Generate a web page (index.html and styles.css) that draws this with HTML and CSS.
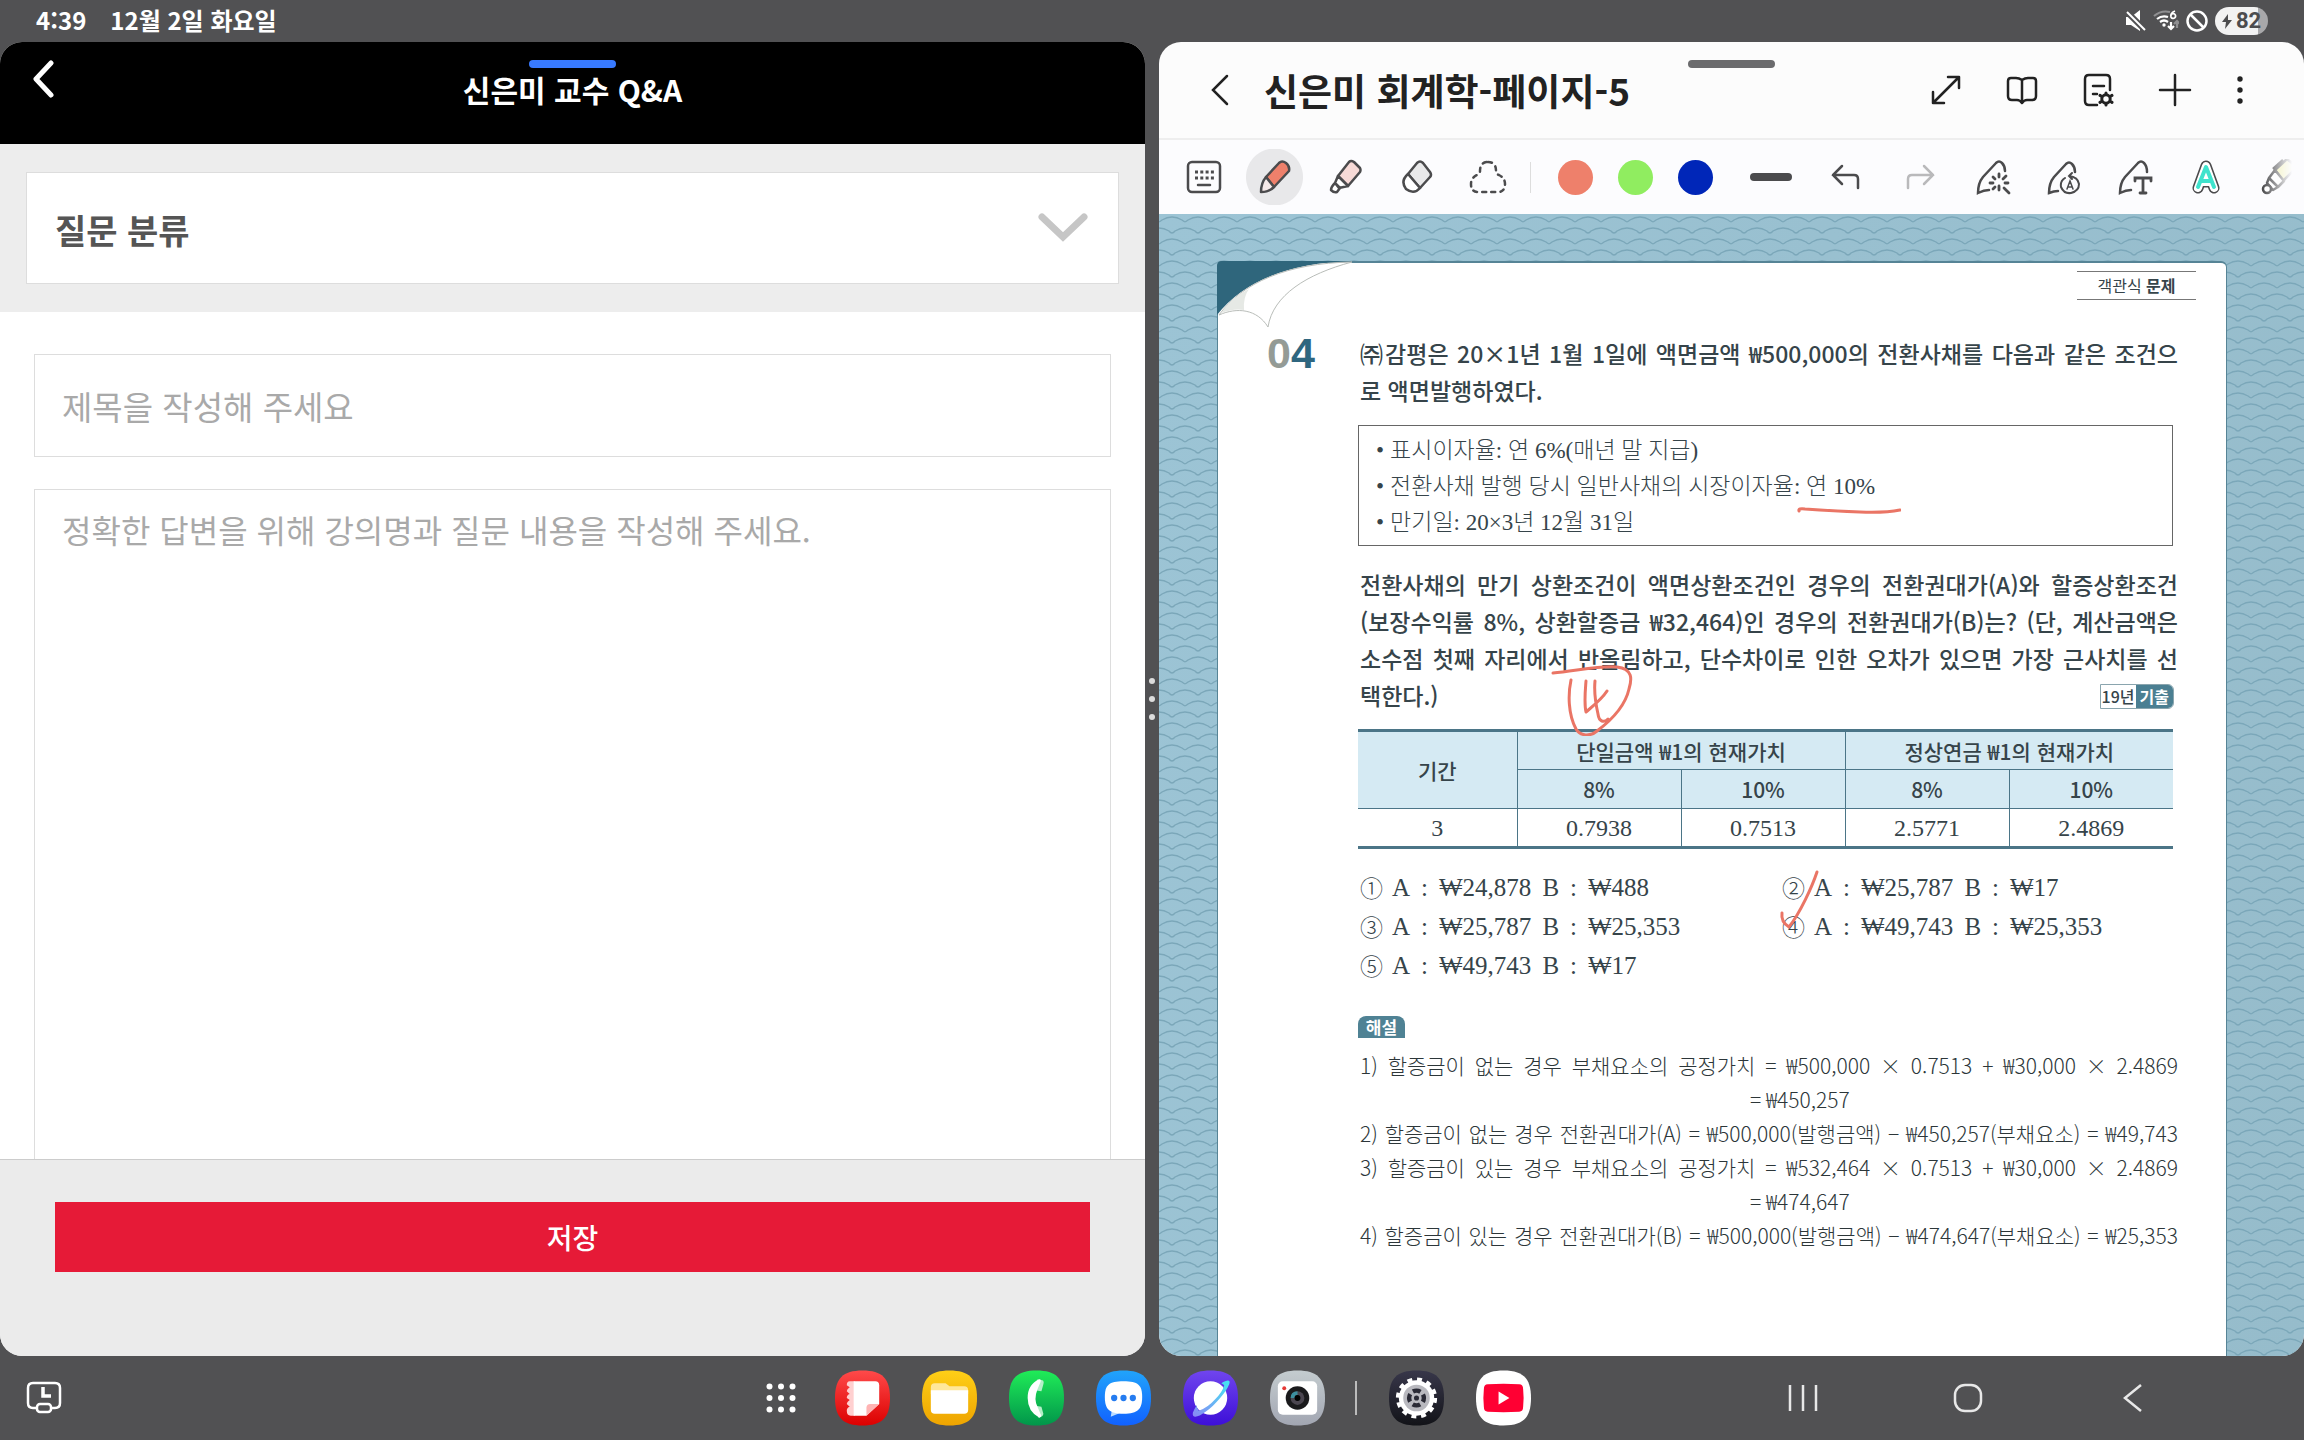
FILE: index.html
```html
<!DOCTYPE html>
<html lang="ko">
<head>
<meta charset="utf-8">
<meta name="viewport" content="width=device-width, initial-scale=1">
<title>신은미 교수 Q&amp;A</title>
<link rel="stylesheet" href="styles.css">
</head>
<body>
<div class="screen">
  <header class="status">
    <div class="status-left"><time>4:39</time><span>12월 2일 화요일</span></div>
    <div class="status-right">
      <svg width="20" height="22" viewBox="0 0 20 22"><path d="M0 7h5l9-7v21l-9-6H0z" fill="#fff"/><path d="M0 1l19 19" stroke="#515153" stroke-width="6"/><path d="M1 2l18 18" stroke="#fff" stroke-width="2"/></svg>
      <svg width="26" height="22" viewBox="0 0 26 22" fill="none" stroke-width="2.2"><path d="M1 6Q8 0 17 2" stroke="#8f8f91"/><path d="M4 9q5-4 11-2M7 12q4-3 8 0" stroke="#fff"/><circle cx="11" cy="15" r="1.7" fill="#fff"/><path d="M22 1q-5 2-4 6a2.400 2.400 0 1 0 0-2" stroke="#fff" stroke-width="1.800"/><path d="M18 12v7m-3-3l3 3 3-3" stroke="#fff"/><path d="M24 18v-7m-3 3l3-3 3 3" stroke="#8f8f91"/></svg>
      <svg width="22" height="22" viewBox="0 0 22 22" fill="none" stroke="#fff" stroke-width="2.500"><circle cx="11" cy="11" r="9.500"/><path d="M4.500 4.500l13 13"/></svg>
      <div class="battery"><svg width="10" height="15" viewBox="0 0 10 15"><path d="M6 0L0 8h4l-1 7 7-9H6z" fill="#4c4c4e"/></svg><span>82</span></div>
    </div>
  </header>

  <main class="split">
    <section class="app qna">
      <span class="handle handle-active"></span>
      <header class="qna-head">
        <button class="plain qna-back" aria-label="뒤로"><svg width="22" height="38" viewBox="0 0 22 38" fill="none" stroke="#fff" stroke-width="5" stroke-linecap="round" stroke-linejoin="round"><path d="M19 3L4 19l15 16"/></svg></button>
        <h1>신은미 교수 Q&amp;A</h1>
      </header>
      <div class="category">
        <div class="select-wrap">
          <select aria-label="질문 분류"><option>질문 분류</option></select>
          <svg class="select-arrow" width="52" height="32" viewBox="0 0 52 32" fill="none" stroke="#c6c6c6" stroke-width="7" stroke-linecap="round"><path d="M5 5l21 20L47 5"/></svg>
        </div>
      </div>
      <form class="form" id="question">
        <input type="text" placeholder="제목을 작성해 주세요" aria-label="제목">
        <textarea placeholder="정확한 답변을 위해 강의명과 질문 내용을 작성해 주세요." aria-label="질문 내용"></textarea>
      </form>
      <footer class="save-bar"><button type="submit" form="question">저장</button></footer>
    </section>

    <div class="divider"><i></i><i></i><i></i></div>

    <section class="app notes">
      <span class="handle"></span>
      <header class="notes-head">
        <button class="plain" aria-label="뒤로"><svg width="24" height="36" viewBox="0 0 24 36" fill="none" stroke="#222" stroke-width="2.500" stroke-linecap="round"><path d="M19 4L5 18l14 14"/></svg></button>
        <h2>신은미 회계학-페이지-5</h2>
        <div class="head-tools">
          <button class="plain" aria-label="확대"><svg width="32" height="32" viewBox="0 0 32 32" fill="none" stroke="#222" stroke-width="2.500" stroke-linecap="round" stroke-linejoin="round"><path d="M3 29L29 3M18 3h11v11M3 18v11h11"/></svg></button>
          <button class="plain" aria-label="읽기"><svg width="32" height="32" viewBox="0 0 32 32" fill="none" stroke="#222" stroke-width="2.500" stroke-linejoin="round"><path d="M16 6q-3-2-6-2H5q-3 0-3 3v15q0 4 4 4h5q3 0 5 3 2-3 5-3h5q4 0 4-4V7q0-3-3-3h-5q-3 0-6 2zv22"/></svg></button>
          <button class="plain" aria-label="페이지 설정"><svg width="32" height="34" viewBox="0 0 32 34" fill="none" stroke="#222" stroke-width="2.500" stroke-linecap="round"><path d="M15 32H7q-4 0-4-4V6q0-4 4-4h17q4 0 4 4v11M11 13h11M11 21h4"/><circle cx="24" cy="26" r="4.200" stroke-width="3"/><path d="M24 20v1m0 10v1m5-9l1-.6m-12 7l1-.6m0-5.800l-1-.6m12 7l-1-.6" stroke-width="3"/></svg></button>
          <button class="plain" aria-label="추가"><svg width="34" height="34" viewBox="0 0 34 34" stroke="#222" stroke-width="2.500" stroke-linecap="round"><path d="M17 2v30M2 17h30"/></svg></button>
          <button class="plain" aria-label="더보기"><svg width="8" height="30" viewBox="0 0 8 30" fill="#222"><circle cx="4" cy="4" r="2.700"/><circle cx="4" cy="15" r="2.700"/><circle cx="4" cy="26" r="2.700"/></svg></button>
        </div>
      </header>

      <div class="toolbar">
        <button class="tool" aria-label="키보드"><svg width="36" height="34" viewBox="0 0 36 34" fill="none" stroke="#4b4b4d" stroke-width="2.500"><rect x="2" y="2" width="32" height="30" rx="4"/><path d="M9 12h19M9 18h19" stroke-dasharray="3 2.300" stroke-width="3"/><path d="M12 25h12" stroke-linecap="round"/></svg></button>
        <button class="tool" aria-label="펜" aria-pressed="true"><svg width="36" height="36" viewBox="0 0 36 36" stroke="#4b4b4d" stroke-width="2.500" stroke-linejoin="round"><path d="M9 18L22 4q3-3 7 0t3 8L17 28z" fill="#ee806b"/><path d="M9 18l8 10q-5 5-13 5 0-9 5-15z" fill="#f6e9e8"/></svg></button>
        <button class="tool" aria-label="형광펜"><svg width="36" height="36" viewBox="0 0 36 36" stroke="#4b4b4d" stroke-width="2.500" stroke-linejoin="round"><path d="M10 17L21 3q2-2 5 0l6 6q1 2 0 4L20 27z" fill="#f7dad7"/><path d="M10 17l10 10-9 2-4-5zM7 24l5 5-3 4q-3 1-6-2 0-3 4-7z" fill="#fff"/></svg></button>
        <button class="tool" aria-label="지우개"><svg width="36" height="36" viewBox="0 0 36 36" stroke="#4b4b4d" stroke-width="2.500" stroke-linejoin="round"><path d="M9 15l9-11q3-3 6 0l7 9q2 3 0 5l-10 11z" fill="#e9e9ea"/><path d="M9 15l12 14q-6 7-14 1-6-8 2-15z" fill="#fff"/></svg></button>
        <button class="tool" aria-label="올가미"><svg width="38" height="36" viewBox="0 0 38 36" fill="none" stroke="#4b4b4d" stroke-width="2.500" stroke-linecap="round"><path d="M19 3q8 0 8 9 0 3 3 4 6 3 6 9 0 8-7 8H9q-7 0-7-8 0-6 6-9 3-1 3-4 0-9 8-9z" stroke-dasharray="4 5"/></svg></button>
        <span class="tool-line"></span>
        <button class="swatch" aria-label="산호색"><i class="coral"></i></button>
        <button class="swatch" aria-label="연두색"><i class="green"></i></button>
        <button class="swatch" aria-label="파란색"><i class="blue"></i></button>
        <button class="tool tool-width" aria-label="굵기"><i></i></button>
        <button class="tool tool-wide" aria-label="실행 취소"><svg width="30" height="30" viewBox="0 0 30 30" fill="none" stroke="#4b4b4d" stroke-width="2.500" stroke-linecap="round"><path d="M11 4L2 13l9 9M2 13h21q4 0 4 4v9"/></svg></button>
        <button class="tool tool-wide" aria-label="다시 실행"><svg width="30" height="30" viewBox="0 0 30 30" fill="none" stroke="#b9b9bb" stroke-width="2.500" stroke-linecap="round"><path d="M19 4l9 9-9 9M28 13H7q-4 0-4 4v9"/></svg></button>
        <button class="tool" aria-label="자동 정리"><svg width="36" height="36" viewBox="0 0 36 36" fill="none" stroke="#4b4b4d" stroke-width="2.500" stroke-linecap="round"><path d="M14 31q-5 0-11 3 0-10 5-16L21 4q3-3 6 0t3 8"/><path d="M24 15v3m0 9v4M15 24h3m12 0h3M18 18l2 2m8 0l3-3m-13 13l2-2m9 1l5 5" stroke-width="2.800"/></svg></button>
        <button class="tool" aria-label="글씨 다듬기"><svg width="36" height="36" viewBox="0 0 36 36" fill="none" stroke="#4b4b4d" stroke-width="2.500" stroke-linecap="round"><path d="M12 32q-4 0-9 2 0-10 5-16L20 5q3-3 6 0t3 8"/><path d="M19 19q-5 3-4 9 3 7 10 6 8-2 8-9-1-7-10-8m3-3l-3 3 3 3" stroke-width="2"/><path d="M21 30l3-8 3 8m-5-2h4" stroke-width="1.500"/></svg></button>
        <button class="tool" aria-label="텍스트 변환"><svg width="36" height="36" viewBox="0 0 36 36" fill="none" stroke="#4b4b4d" stroke-width="2.500" stroke-linecap="round"><path d="M14 31q-5 0-11 3 0-10 5-16L21 4q3-3 6 0t3 9"/><path d="M18 22v-3h16v3m-8-3v15m-3 0h6" stroke-width="2.800"/></svg></button>
        <button class="tool" aria-label="스타일"><svg width="28" height="34" viewBox="0 0 28 34" fill="none" stroke-linecap="round" stroke-linejoin="round"><path d="M6 28L14 6l8 22M10 22h8" stroke="#4b4b4d" stroke-width="11"/><path d="M6 28L14 6l8 22M10 22h8" stroke="#fff" stroke-width="8"/><path d="M6 27L14 7l8 20M9 21h10" stroke="#3fe3cd" stroke-width="4"/></svg></button>
        <button class="tool tool-fade" aria-label="마커"><svg width="36" height="36" viewBox="0 0 36 36" stroke="#4b4b4d" stroke-width="2.500" stroke-linejoin="round"><path d="M16 11L28 0l10 8-14 14z" fill="#f2f0a8"/><path d="M14 10L24 1" fill="none"/><path d="M16 11l9 11-6 6-9-9zM10 19l9 9-5 3-6-7z" fill="#fff"/><circle cx="8" cy="30" r="4" fill="#fff"/></svg></button>
      </div>

      <div class="canvas">
        <svg class="waves" width="100%" height="100%" aria-hidden="true">
          <defs><pattern id="wave" width="26" height="22" patternUnits="userSpaceOnUse"><path d="M-1 8q2 0 4-2 5-3 10-3t10 3q2 2 4 2M-14 19q2 0 4-2 5-3 10-3t10 3q3 4 6 0 5-3 10-3t10 3" fill="none" stroke="#7ba7b9" stroke-width="1.300"/></pattern></defs>
          <rect width="100%" height="100%" fill="url(#wave)"/>
        </svg>
        <article class="sheet">
          <svg class="curl" width="136" height="70" viewBox="0 0 136 70"><path d="M0 54V5q0-5 5-5h130Q40 3 0 54z" fill="#2f667c"/><path d="M2 54C25 22 70 2 135 1 90 13 56 34 51 66 40 48 20 46 2 54z" fill="#fff" stroke="#b9bdb9"/><path d="M4 52q12-17 28-24-6 8-5 21-10-2-23 3z" fill="#e6e9e5"/></svg>
          <p class="tag">객관식 <b>문제</b></p>
          <div class="number"><span>0</span><b>4</b></div>
          <div class="body">
            <p class="ask">㈜감평은 20×1년 1월 1일에 액면금액 ₩500,000의 전환사채를 다음과 같은 조건으<br><span class="last">로 액면발행하였다.</span></p>
            <ul class="terms">
              <li>표시이자율: 연 6%(매년 말 지급)</li>
              <li>전환사채 발행 당시 일반사채의 시장이자율: <span class="anchor">연 10%<svg class="ink underline" width="104" height="8" viewBox="0 0 104 8"><path d="M2 5Q1 2 8 3q30 2 55 3t40-2"/></svg></span></li>
              <li>만기일: 20×3년 12월 31일</li>
            </ul>
            <p class="ask anchor">전환사채의 만기 상환조건이 액면상환조건인 경우의 전환권대가(A)와 할증상환조건<br>(보장수익률 8%, 상환할증금 ₩32,464)인 경우의 전환권대가(B)는? (단, 계산금액은<br>소수점 첫째 자리에서 반올림하고, 단수차이로 인한 오차가 있으면 가장 근사치를 선<br><span class="last">택한다.)</span>
              <span class="exam"><span>19년</span><b>기출</b></span>
              <svg class="ink circled" width="92" height="72" viewBox="0 0 92 72"><path d="M6 9C28 7 56 1 70 3c16 2 15 12 12 22C78 43 62 58 50 67c-7 6-17 5-21-2C21 50 21 30 24 16M39 17c-1 13-2 22 0 31 7-6 16-13 21-21M48 17c-1 10 1 24 3 33 1 8 6 9 10 5"/></svg>
            </p>
            <table>
              <thead>
                <tr><th rowspan="2" class="period">기간</th><th colspan="2">단일금액 ₩1의 현재가치</th><th colspan="2">정상연금 ₩1의 현재가치</th></tr>
                <tr><th>8%</th><th>10%</th><th>8%</th><th>10%</th></tr>
              </thead>
              <tbody><tr><td>3</td><td>0.7938</td><td>0.7513</td><td>2.5771</td><td>2.4869</td></tr></tbody>
            </table>
            <ol class="choices">
              <li><i>①</i><span>A</span><span>:</span><span>₩24,878</span><span>B</span><span>:</span><span>₩488</span></li>
              <li><i>②</i><span>A</span><span>:</span><span>₩25,787</span><span>B</span><span>:</span><span>₩17</span></li>
              <li><i>③</i><span>A</span><span>:</span><span>₩25,787</span><span>B</span><span>:</span><span>₩25,353</span></li>
              <li class="anchor"><i>④</i><span>A</span><span>:</span><span>₩49,743</span><span>B</span><span>:</span><span>₩25,353</span><svg class="ink check" width="50" height="64" viewBox="0 0 50 64"><path d="M41 3C36 18 24 44 13 58 8 55 5 51 6 44"/></svg></li>
              <li><i>⑤</i><span>A</span><span>:</span><span>₩49,743</span><span>B</span><span>:</span><span>₩17</span></li>
            </ol>
            <h3>해설</h3>
            <div class="solution">
              <p>1) 할증금이 없는 경우 부채요소의 공정가치 = ₩500,000 × 0.7513 + ₩30,000 × 2.4869</p>
              <p class="result">= ₩450,257</p>
              <p>2) 할증금이 없는 경우 전환권대가(A) = ₩500,000(발행금액) − ₩450,257(부채요소) = ₩49,743</p>
              <p>3) 할증금이 있는 경우 부채요소의 공정가치 = ₩532,464 × 0.7513 + ₩30,000 × 2.4869</p>
              <p class="result">= ₩474,647</p>
              <p>4) 할증금이 있는 경우 전환권대가(B) = ₩500,000(발행금액) − ₩474,647(부채요소) = ₩25,353</p>
            </div>
          </div>
        </article>
      </div>
    </section>
  </main>

  <nav class="taskbar">
    <button class="plain recent-clock" aria-label="최근 기록"><svg width="36" height="34" viewBox="0 0 36 34" fill="none" stroke="#fff" stroke-width="2.500"><path d="M10 27H7q-5 0-5-5V7q0-5 5-5h22q5 0 5 5v15q0 5-5 5h-3"/><rect x="11" y="23" width="14" height="8" rx="3"/><path d="M17 6v9h8" stroke-width="3.500"/></svg></button>
    <div class="dock">
      <button class="plain" aria-label="모든 앱"><svg width="30" height="30" viewBox="0 0 30 30" fill="#fff"><circle cx="3.500" cy="3.500" r="3"/><circle cx="15" cy="3.500" r="3"/><circle cx="26.500" cy="3.500" r="3"/><circle cx="3.500" cy="15" r="3"/><circle cx="15" cy="15" r="3"/><circle cx="26.500" cy="15" r="3"/><circle cx="3.500" cy="26.500" r="3"/><circle cx="15" cy="26.500" r="3"/><circle cx="26.500" cy="26.500" r="3"/></svg></button>
      <button class="plain" aria-label="노트"><svg width="55" height="56" viewBox="0 0 56 56"><defs><linearGradient id="g1" x2="0" y2="1"><stop stop-color="#ff4a4a"/><stop offset="1" stop-color="#dc0000"/></linearGradient></defs><path d="M28 0C48 0 56 8 56 28S48 56 28 56 0 48 0 28 8 0 28 0z" fill="url(#g1)"/><path d="M20 11h-5q-3 0-3 4l3 2q-3 2-3 4l3 3q-3 1-3 4l3 2q-3 2-3 4l3 3q-3 1-3 4 0 5 4 5h4z" fill="#ffd0d0"/><path d="M19 11h22q4 0 4 4v19L32 46H19z" fill="#fff"/><path d="M45 34h-9q-4 0-4 4v8z" fill="#ffb3b3"/></svg></button>
      <button class="plain" aria-label="내 파일"><svg width="55" height="56" viewBox="0 0 56 56"><defs><linearGradient id="g2" x2="0" y2="1"><stop stop-color="#fecf17"/><stop offset="1" stop-color="#eea400"/></linearGradient></defs><path d="M28 0C48 0 56 8 56 28S48 56 28 56 0 48 0 28 8 0 28 0z" fill="url(#g2)"/><path d="M9 24v-7q0-4 4-4h11l4 3h15q4 0 4 4v4z" fill="#ffe79a"/><path d="M9 20h38v20q0 4-4 4H13q-4 0-4-4z" fill="#fff"/></svg></button>
      <button class="plain" aria-label="전화"><svg width="55" height="56" viewBox="0 0 56 56"><defs><linearGradient id="g3" x2="0" y2="1"><stop stop-color="#20ec58"/><stop offset="1" stop-color="#01954a"/></linearGradient></defs><path d="M28 0C48 0 56 8 56 28S48 56 28 56 0 48 0 28 8 0 28 0z" fill="url(#g3)"/><path d="M26 20l3-11 5 1q2 1 1 4l-2 7zM27 36l6 1 2 7q0 3-5 4z" fill="#b5efc8"/><path d="M31 9q-12 5-12 19t12 20q3-1 1-4l-3-7q-4-8 0-18l3-7q1-3-1-3z" fill="#fff"/></svg></button>
      <button class="plain" aria-label="메시지"><svg width="55" height="56" viewBox="0 0 56 56"><defs><linearGradient id="g4" x2="0" y2="1"><stop stop-color="#21a4fb"/><stop offset="1" stop-color="#1161ff"/></linearGradient></defs><path d="M28 0C48 0 56 8 56 28S48 56 28 56 0 48 0 28 8 0 28 0z" fill="url(#g4)"/><path d="M16 41l-1 6 10-4z" fill="#bcdcff"/><path d="M28 11c15 0 19 4 19 16s-4 17-19 17S9 39 9 27s4-16 19-16z" fill="#fff"/><g fill="#257cf0"><circle cx="18.500" cy="28" r="3.200"/><circle cx="28" cy="28" r="3.200"/><circle cx="37.500" cy="28" r="3.200"/></g></svg></button>
      <button class="plain" aria-label="인터넷"><svg width="55" height="56" viewBox="0 0 56 56"><defs><linearGradient id="g5" x2="0" y2="1"><stop stop-color="#7045ee"/><stop offset="1" stop-color="#3d0fd8"/></linearGradient><linearGradient id="g6" x1="1" x2="0" y2="1"><stop stop-color="#42e8f2"/><stop offset="1" stop-color="#8b87f5"/></linearGradient></defs><path d="M28 0C48 0 56 8 56 28S48 56 28 56 0 48 0 28 8 0 28 0z" fill="url(#g5)"/><circle cx="28" cy="28" r="17" fill="#fff"/><path d="M39 13c6-4 10-4 8 1-3 8-14 21-24 28-8 6-14 7-13 1q1-3 4-8 0 4 2 6 9-3 17-12 7-7 9-14-1-1-3-2z" fill="url(#g6)"/></svg></button>
      <button class="plain" aria-label="카메라"><svg width="55" height="56" viewBox="0 0 56 56"><defs><linearGradient id="g7" x2="0" y2="1"><stop stop-color="#c4cccf"/><stop offset="1" stop-color="#a2a6b2"/></linearGradient></defs><path d="M28 0C48 0 56 8 56 28S48 56 28 56 0 48 0 28 8 0 28 0z" fill="url(#g7)"/><rect x="8" y="11" width="40" height="34" rx="5" fill="#fff"/><circle cx="14.500" cy="18" r="2" fill="#e53935"/><circle cx="28" cy="28" r="12" fill="#1a1a1c"/><circle cx="28" cy="28" r="7" fill="#4b4650"/><path d="M21 28q0-7 7-7v4q-3 0-3 3z" fill="#3c8e9e"/><circle cx="28" cy="28" r="3" fill="#000"/></svg></button>
      <span class="dock-line"></span>
      <button class="plain" aria-label="설정"><svg width="55" height="56" viewBox="0 0 56 56"><defs><linearGradient id="g8" x2="0" y2="1"><stop stop-color="#38374a"/><stop offset="1" stop-color="#121318"/></linearGradient></defs><path d="M28 0C48 0 56 8 56 28S48 56 28 56 0 48 0 28 8 0 28 0z" fill="url(#g8)"/><circle cx="28" cy="28" r="18" fill="#fff"/><circle cx="28" cy="28" r="19" fill="none" stroke="#fff" stroke-width="4" stroke-dasharray="5 4.950"/><circle cx="28" cy="28" r="13.500" fill="#b9b9bf"/><circle cx="28" cy="28" r="7.500" fill="none" stroke="#2a2a35" stroke-width="4.500" stroke-dasharray="8 3.780" stroke-dashoffset="4"/><circle cx="28" cy="28" r="2.600" fill="#2a2a35"/></svg></button>
      <button class="plain" aria-label="유튜브"><svg width="55" height="56" viewBox="0 0 56 56"><path d="M28 0C48 0 56 8 56 28S48 56 28 56 0 48 0 28 8 0 28 0z" fill="#fff"/><path d="M12 14q16-1 32 0 4 0 4 5 1 9 0 18 0 5-4 5-16 1-32 0-4 0-4-5-1-9 0-18 0-5 4-5z" fill="#ff0033"/><path d="M23 21.500v13L34 28z" fill="#fff"/></svg></button>
    </div>
    <div class="nav">
      <button class="plain" aria-label="최근 앱"><svg width="30" height="28" viewBox="0 0 30 28" stroke="#e8e8e8" stroke-width="2.500"><path d="M2 1v26M15 1v26M28 1v26"/></svg></button>
      <button class="plain" aria-label="홈"><svg width="32" height="32" viewBox="0 0 32 32" fill="none" stroke="#e8e8e8" stroke-width="2.500"><rect x="3" y="3" width="26" height="26" rx="10"/></svg></button>
      <button class="plain" aria-label="뒤로"><svg width="24" height="30" viewBox="0 0 24 30" fill="none" stroke="#e8e8e8" stroke-width="2.500"><path d="M20 2L4 15l16 13"/></svg></button>
    </div>
  </nav>
</div>
</body>
</html>
```
FILE: styles.css
```css
* { box-sizing: border-box; }
body {
  margin: 0;
  background: #515153;
  font-family: "Noto Sans CJK KR", "Noto Sans", sans-serif;
}
h1, h2, h3, p, ul, ol { margin: 0; padding: 0; list-style: none; }
button, input, textarea, select { font: inherit; color: inherit; border: 0; border-radius: 0; padding: 0; margin: 0; }
svg { display: block; flex: none; }
i { font-style: normal; }
.plain { background: none; display: grid; place-items: center; }
.screen { height: 100vh; display: grid; grid-template-rows: 42px minmax(0, 1fr) 84px; }

/* status bar */
.status { display: flex; justify-content: space-between; padding: 0 36px; color: #fff; font-weight: 700; font-size: 24px; line-height: 40px; }
.status-left { display: flex; gap: 24px; }
.status-right { display: flex; align-items: center; gap: 7px; }
.battery { display: flex; align-items: center; justify-content: center; gap: 4px; width: 53px; height: 28px; border-radius: 14px; background: linear-gradient(90deg, #f2f2f2 43px, #a8a8aa 43px); color: #4c4c4e; font: 700 22px/28px Roboto, sans-serif; }

/* split windows */
.split { display: grid; grid-template-columns: minmax(0, 1fr) 14px minmax(0, 1fr); }
.app { position: relative; display: flex; flex-direction: column; min-height: 0; overflow: hidden; border-radius: 22px; background: #fff; }
.handle { position: absolute; top: 18px; left: 50%; width: 87px; height: 8px; margin-left: -44px; border-radius: 4px; background: #6b6b6d; z-index: 1; }
.handle-active { background: #387aff; }
.divider { display: flex; flex-direction: column; align-items: center; justify-content: center; gap: 12px; }
.divider i { width: 6px; height: 6px; border-radius: 3px; background: #dcdcdc; }

/* question form */
.qna-head { position: relative; height: 102px; background: #000; color: #fff; }
.qna-head h1 { font-size: 30px; font-weight: 700; line-height: 94px; text-align: center; }
.qna-back { position: absolute; left: 32px; top: 18px; }
.category { padding: 28px 26px; background: #ededed; }
.select-wrap { position: relative; }
.select-wrap select { appearance: none; width: 100%; height: 112px; padding: 2px 28px 0; border: 1px solid #ddd; background: #fff; color: #555; font-size: 34px; font-weight: 700; }
.select-arrow { position: absolute; right: 30px; top: 40px; pointer-events: none; }
.form { flex: 1; display: flex; flex-direction: column; gap: 32px; padding: 42px 34px 0; min-height: 0; }
.form input, .form textarea { display: block; width: 100%; border: 1px solid #ddd; padding: 0 27px; background: #fff; font-size: 33px; color: #333; outline: 0; }
.form input { height: 103px; }
.form textarea { flex: 1; padding-top: 15px; border-bottom: 0; resize: none; font-size: 32px; line-height: 48px; }
.form ::placeholder { color: #a9a9a9; opacity: 1; }
.save-bar { padding: 42px 55px 84px; border-top: 1px solid #ccc; background: #ebebeb; }
.save-bar button { display: block; width: 100%; height: 70px; background: #e61a37; color: #fff; font-size: 28px; font-weight: 500; }

/* note header and tools */
.notes { background: #fcfcfc; }
.notes-head { display: flex; align-items: center; gap: 32px; height: 98px; padding: 0 60px 0 49px; border-bottom: 2px solid #eee; }
.notes-head h2 { font-size: 37px; font-weight: 700; line-height: 48px; color: #222; }
.head-tools { display: flex; align-items: center; gap: 44px; margin-left: auto; }
.toolbar { display: flex; align-items: center; height: 74px; padding-left: 9px; background: #fcfcfe; overflow: hidden; }
.tool { flex: none; display: grid; place-items: center; width: 71px; height: 56px; background: none; }
.tool[aria-pressed="true"] { background: radial-gradient(circle, #e8e8ea 28px, transparent 29px); }
.tool-line { flex: none; width: 1px; height: 31px; margin: 0 14px 0 7px; background: #ddd; }
.tool-wide { width: 74px; }
.swatch { flex: none; display: grid; place-items: center; width: 60px; height: 56px; background: none; }
.swatch i { width: 35px; height: 35px; border-radius: 50%; }
.coral { background: #ee806b; }
.green { background: #90ed60; }
.blue { background: #0026b8; }
.tool-width { width: 84px; padding-left: 8px; }
.tool-width i { width: 42px; height: 8px; border-radius: 4px; background: #4b4b4d; }
.tool-fade { -webkit-mask-image: linear-gradient(90deg, #000 30%, transparent 72%); mask-image: linear-gradient(90deg, #000 30%, transparent 72%); }

/* scanned page */
.canvas { position: relative; flex: 1; min-height: 0; overflow: hidden; padding: 47px 77px 0 58px; background: linear-gradient(100deg, #9cc4d5, #96bccb); }
.waves { position: absolute; left: 0; top: 0; }
.sheet { position: relative; display: grid; grid-template-columns: 142px minmax(0, 1fr); grid-template-rows: auto 1fr; min-height: 100%; padding: 8px 48px 120px 0; border: solid #568496; border-width: 2px 1px 0; border-radius: 6px 6px 0 0; background: #fff; color: #36444a; }
.curl { position: absolute; left: -1px; top: -2px; }
.tag { grid-column: 1 / -1; justify-self: end; width: 119px; margin: 0 -18px 35px 0; border: solid #777; border-width: 1px 0; font-size: 16px; line-height: 27px; text-align: center; }
.number { padding-left: 49px; font-size: 43px; line-height: 37px; font-family: "Liberation Sans", sans-serif; font-weight: 700; color: #949b96; }
.number b { color: #2f667f; }
.ask { font-size: 23px; font-weight: 500; line-height: 37px; text-align: justify; text-align-last: justify; white-space: nowrap; }
.last { display: block; text-align-last: left; }
.anchor { position: relative; }
.terms { margin: 16px 5px 20px -2px; padding: 7px 17px 4px; border: 1px solid #666; font: 300 23px/36px "Liberation Serif", "Noto Sans CJK KR", serif; white-space: nowrap; }
.terms li::before { content: "•"; margin-right: 6px; }
.ink { position: absolute; fill: none; stroke: #ea7565; stroke-width: 3; stroke-linecap: round; stroke-linejoin: round; }
.underline { left: -9px; top: 32px; }
.circled { left: 187px; top: 98px; }
.check { left: -6px; top: -38px; }
.exam { position: absolute; right: 4px; top: 118px; display: flex; border: 1px solid #8aa5ae; border-radius: 0 6px 6px 0; overflow: hidden; font-size: 16px; line-height: 23px; text-align-last: auto; }
.exam span { padding: 0 1px; }
.exam b { padding: 0 4px; background: #4b7f92; color: #fff; }
table { width: calc(100% - 3px); margin: 15px 0 19px -2px; border-collapse: collapse; table-layout: fixed; border: solid #4b7587; border-width: 3px 0; font-size: 21px; line-height: 36px; text-align: center; }
th, td { height: 39px; padding: 0; border: 1px solid #4b7587; font-weight: 500; }
tr > :first-child.period, tbody td:first-child { border-left: 0; }
tr > :last-child { border-right: 0; }
thead { background: #d5eaf3; }
.period { width: 159px; }
td { font: 24px/36px "Liberation Serif", serif; }
.choices { display: grid; grid-template-columns: 422px 1fr; font: 25px/39px "Liberation Serif", "Noto Sans CJK KR", serif; }
.choices li { display: flex; gap: 11px; height: 39px; }
.choices i { width: 21px; font: 300 23px/39px "Noto Sans CJK KR", sans-serif; }
h3 { width: 47px; margin: 31px 0 10px -2px; border-radius: 8px 8px 0 0; background: #4f8294; color: #fff; font-size: 17px; line-height: 22px; text-align: center; }
.solution { color: #2c3639; font-size: 21px; font-weight: 300; line-height: 34px; white-space: nowrap; text-align-last: justify; }
.solution .result { padding-left: 390px; text-align-last: left; }

/* task bar */
.taskbar { display: grid; grid-template-columns: 1fr auto 1fr; align-items: center; padding-right: 14px; }
.recent-clock { width: 48px; height: 48px; margin-left: 20px; }
.dock { display: flex; align-items: center; gap: 32px; }
.dock button:first-child { width: 44px; }
.dock-line { width: 2px; height: 34px; margin-left: -2px; background: #bbb; }
.nav { display: flex; justify-content: flex-end; gap: 117px; margin-right: 133px; }
.nav button { width: 48px; height: 48px; }
```
